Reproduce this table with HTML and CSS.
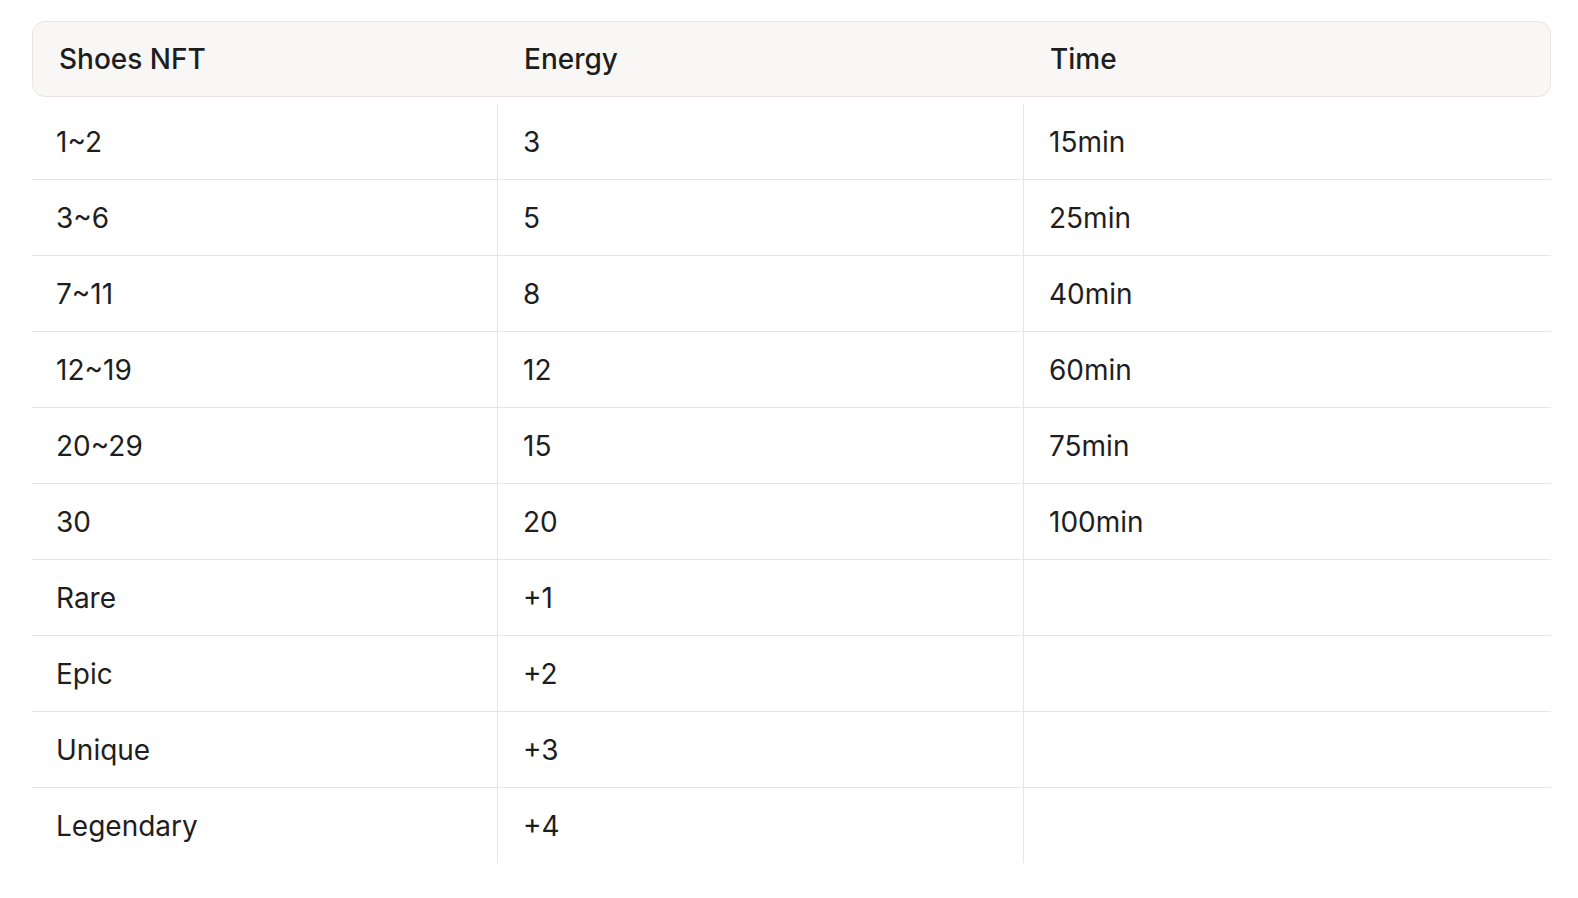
FILE: index.html
```html
<!DOCTYPE html>
<html lang="en">
<head>
<meta charset="utf-8">
<title>Shoes NFT Energy</title>
<link rel="stylesheet" href="styles.css">
</head>
<body>
<div class="table">
  <div class="head">
    <div class="hcell">Shoes NFT</div>
    <div class="hcell">Energy</div>
    <div class="hcell">Time</div>
  </div>
  <div class="body">
    <div class="row"><div class="cell">1~2</div><div class="cell">3</div><div class="cell">15min</div></div>
    <div class="row"><div class="cell">3~6</div><div class="cell">5</div><div class="cell">25min</div></div>
    <div class="row"><div class="cell">7~11</div><div class="cell">8</div><div class="cell">40min</div></div>
    <div class="row"><div class="cell">12~19</div><div class="cell">12</div><div class="cell">60min</div></div>
    <div class="row"><div class="cell">20~29</div><div class="cell">15</div><div class="cell">75min</div></div>
    <div class="row"><div class="cell">30</div><div class="cell">20</div><div class="cell">100min</div></div>
    <div class="row"><div class="cell">Rare</div><div class="cell">+1</div><div class="cell"></div></div>
    <div class="row"><div class="cell">Epic</div><div class="cell">+2</div><div class="cell"></div></div>
    <div class="row"><div class="cell">Unique</div><div class="cell">+3</div><div class="cell"></div></div>
    <div class="row"><div class="cell">Legendary</div><div class="cell">+4</div><div class="cell"></div></div>
  </div>
</div>
</body>
</html>
```
FILE: styles.css
```css
html, body {
  margin: 0;
  padding: 0;
  background: #ffffff;
}
body {
  padding: 21px 27px 0 32px;
  font-family: Inter, "Noto Sans", sans-serif;
  color: #1e1e1e;
}
.table {
  width: 1519px;
}
.head {
  display: grid;
  grid-template-columns: 465px 526px 1fr;
  height: 76px;
  box-sizing: border-box;
  border: 1px solid #eae4e3;
  border-radius: 13px;
  background: #f8f7f5;
  margin-bottom: 7px;
}
.hcell {
  display: flex;
  align-items: center;
  padding-left: 26px;
  font-size: 28px;
  font-weight: 500;
}
.row {
  display: grid;
  grid-template-columns: 465px 526px 1fr;
  height: 76px;
  box-sizing: border-box;
  border-bottom: 1px solid #eae4e3;
}
.row:last-child {
  border-bottom: none;
  height: 75px;
}
.cell {
  display: flex;
  align-items: center;
  padding-left: 24px;
  font-size: 28px;
  font-weight: 400;
}
.cell + .cell {
  border-left: 1px solid #eae4e3;
  padding-left: 25px;
}
```
